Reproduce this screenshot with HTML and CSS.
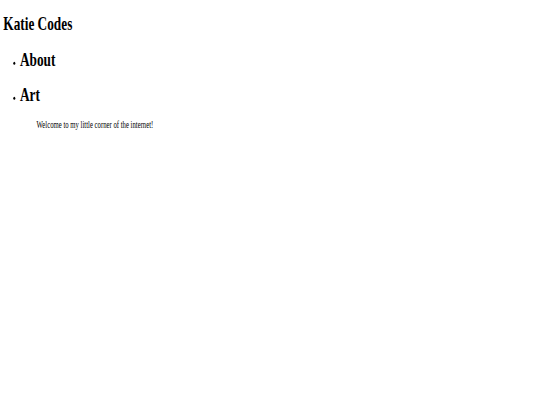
FILE: index.html
```html
<!DOCTYPE html>
<html>
<head>
<meta charset="utf-8">
<title>Katie Codes</title>
<link rel="stylesheet" href="styles.css">
</head>
<body>
<div class="page">
  <h1 class="title">Katie Codes</h1>
  <ul class="nav">
    <li class="nav-item"><h2 class="nav-link">About</h2></li>
    <li class="nav-item"><h2 class="nav-link">Art</h2></li>
  </ul>
  <p class="welcome">Welcome to my little corner of the internet!</p>
</div>
</body>
</html>
```
FILE: styles.css
```css
html, body {
  background: #fff;
}
body {
  margin: 0;
  font-family: "Liberation Serif", "Times New Roman", serif;
  font-size: 16px;
  color: #000;
  overflow: hidden;
}
.page {
  display: flow-root;
  padding: 0 8px;
  transform: scale(0.415, 0.605);
  transform-origin: 0 0;
}
.title {
  font-size: 32px;
  font-weight: bold;
  margin: 21.44px 0;
}
.nav {
  margin: 16px 0;
  padding-left: 40px;
  list-style: disc;
}
.nav-link {
  font-size: 32px;
  font-weight: bold;
  margin: 21.44px 0;
}
.welcome {
  margin: 16px 0 16px 80px;
  font-size: 16.2px;
}
```
